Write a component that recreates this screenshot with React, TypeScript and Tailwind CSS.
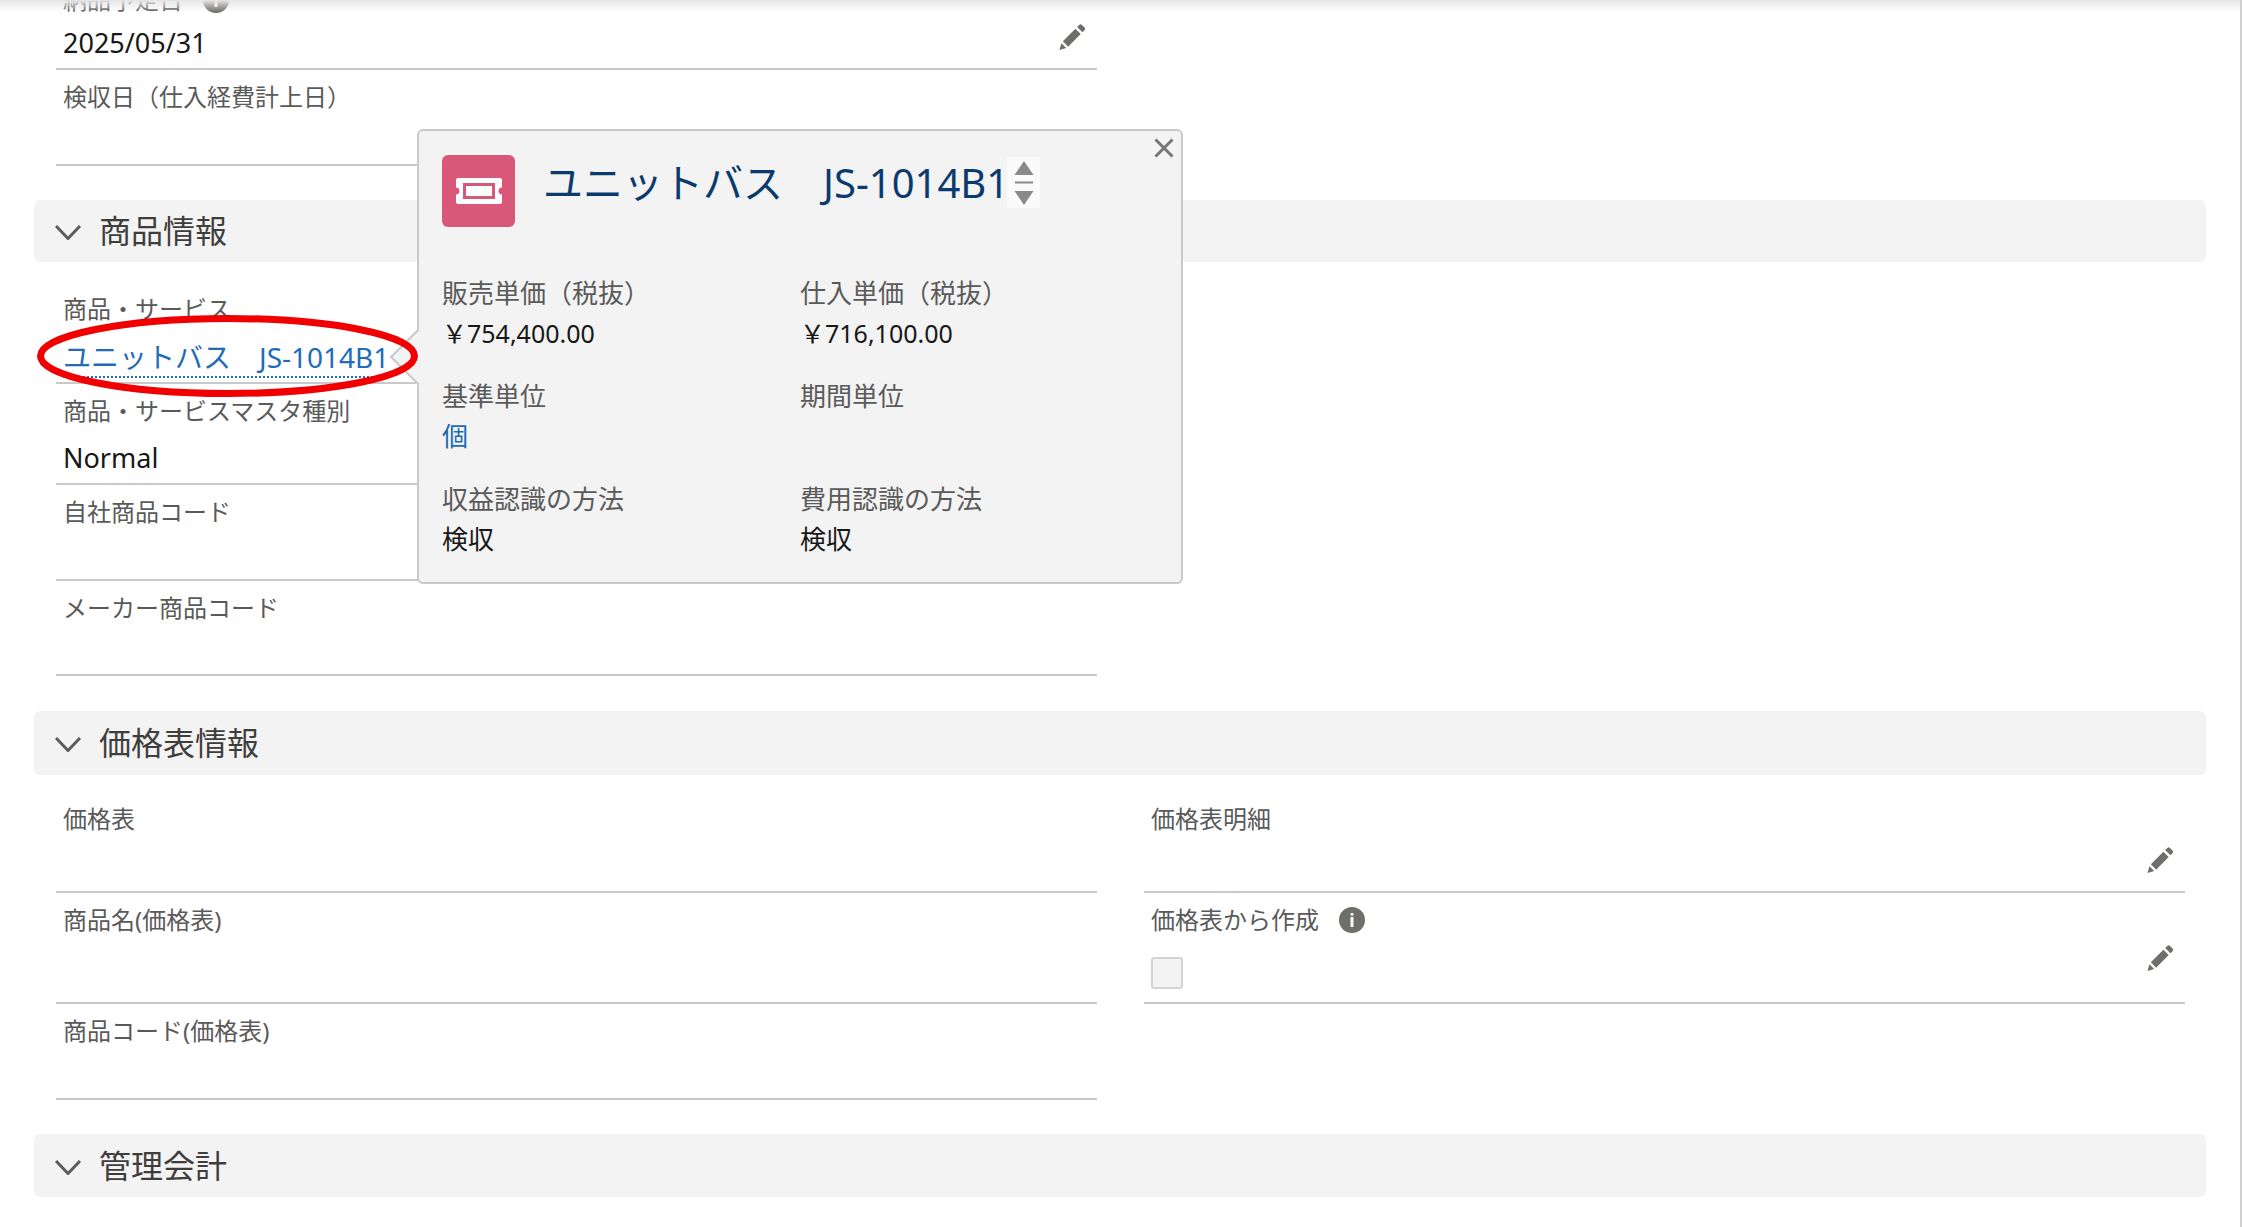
import React from 'react';

const FONT = 'font-["Noto_Sans","Noto_Sans_CJK_JP",sans-serif]';

const Pencil = () => (
  <svg viewBox="0 0 28 28" className="w-[27px] h-[28px] shrink-0 text-[#706e6b]" fill="currentColor">
    <path d="M0.5 27.5 L2.5 20.5 L7.5 25.5 Z" />
    <path d="M4 18.5 L17 5.5 L22.5 11 L9.5 24 Z" />
    <path d="M18.8 3.7 L21 1.5 a2 2 0 0 1 2.8 0 L26.5 4.2 a2 2 0 0 1 0 2.8 L24.3 9.2 Z" />
  </svg>
);

const Info = () => (
  <span className="w-[26px] h-[26px] rounded-full bg-[#706e6b] text-white flex items-center justify-center text-[18px] font-bold leading-none">i</span>
);

const Chevron = () => (
  <svg viewBox="0 0 26 15" className="w-[26px] h-[15px] mt-[3px] shrink-0 text-[#5c5c5c]" fill="none" stroke="currentColor" strokeWidth="3">
    <path d="M1 1 L13 13.5 L25 1" />
  </svg>
);

const SectionHeader = ({ title, className }: { title: string; className: string }) => (
  <div className={`flex items-center gap-[18px] pl-[21px] rounded-[6px] bg-[#f3f3f3] text-[32px] text-[#3e3e3c] ${className}`}>
    <Chevron />
    <span>{title}</span>
  </div>
);

const Label = ({ children }: { children: React.ReactNode }) => (
  <div className="h-[36px] shrink-0 flex items-center gap-[20px] text-[24px] leading-[36px] text-[#5a5a5a]">{children}</div>
);

type FieldProps = {
  label: string;
  value?: React.ReactNode;
  edit?: boolean;
  info?: boolean;
  className: string;
};

const Field = ({ label, value, edit, info, className }: FieldProps) => (
  <div className={`w-[1041px] flex flex-col border-b-2 border-[#c9c9c9] pt-[9px] pl-[7px] pr-[11px] ${className}`}>
    <Label>
      {label}
      {info && <Info />}
    </Label>
    {(value || edit) && (
      <div className="flex items-center justify-between h-[40px] mt-auto mb-[5px] text-[27px] leading-[40px] text-[#181818]">
        <div>{value}</div>
        {edit && (
          <div className="-translate-y-[6px]">
            <Pencil />
          </div>
        )}
      </div>
    )}
  </div>
);

const PopupField = ({ label, children }: { label: string; children?: React.ReactNode }) => (
  <div>
    <div className="h-[40px] text-[26px] leading-[40px] text-[#5a5a5a]">{label}</div>
    <div className="h-[40px] text-[25px] leading-[40px] text-[#181818]">{children}</div>
  </div>
);

const TicketIcon = () => (
  <div className="w-[73px] h-[72px] rounded-[6px] bg-[#d95879] flex items-center justify-center shrink-0">
    <svg viewBox="0 0 48 28" className="w-[48px] h-[28px]" fill="none">
      <path
        d="M3 1 H45 a2 2 0 0 1 2 2 V10.5 a3.5 3.5 0 0 0 0 7 V25 a2 2 0 0 1 -2 2 H3 a2 2 0 0 1 -2 -2 V17.5 a3.5 3.5 0 0 0 0 -7 V3 a2 2 0 0 1 2 -2 Z"
        fill="#fff"
      />
      <rect x="9.5" y="7.5" width="29" height="13" stroke="#d95879" strokeWidth="3" fill="#fff" />
    </svg>
  </div>
);

const Spinner = () => (
  <div className="w-[33px] h-[51px] mt-[2px] -ml-[2px] bg-[#fafafa] flex flex-col items-center justify-center">
    <svg viewBox="0 0 20 44" className="w-[20px] h-[44px]" fill="#8a8a8a">
      <path d="M10 0 L19.5 14 H0.5 Z" />
      <rect x="1" y="20.5" width="18" height="2" />
      <path d="M0.5 30 H19.5 L10 44 Z" />
    </svg>
  </div>
);

const Popup = () => (
  <div className="absolute left-[417px] top-[129px] w-[766px] h-[455px] rounded-[6px] border-2 border-[#c9c9c9] bg-[#f3f3f3]">
    <div className="absolute -left-[21px] top-[206px] w-[40px] h-[40px] rotate-45 border-l-2 border-b-2 border-[#c9c9c9] bg-[#f3f3f3]" />
    <svg viewBox="0 0 20 20" className="absolute right-[7px] top-[7px] w-[20px] h-[20px]" fill="none" stroke="#777" strokeWidth="3">
      <path d="M1.5 1.5 L18.5 18.5 M18.5 1.5 L1.5 18.5" />
    </svg>
    <div className="relative pl-[23px] pt-[24px]">
      <div className="flex items-start">
        <TicketIcon />
        <div className="ml-[28px] h-[56px] text-[40px] leading-[56px] text-[#0b3a6e]">ユニットバス　JS-1014B1</div>
        <Spinner />
      </div>
      <div className="grid grid-cols-[358px_1fr] gap-y-[23px] mt-[46px]">
        <PopupField label="販売単価（税抜）">￥754,400.00</PopupField>
        <PopupField label="仕入単価（税抜）">￥716,100.00</PopupField>
        <PopupField label="基準単位">
          <span className="text-[26px] text-[#1b6bb3]">個</span>
        </PopupField>
        <PopupField label="期間単位" />
        <PopupField label="収益認識の方法">
          <span className="text-[26px]">検収</span>
        </PopupField>
        <PopupField label="費用認識の方法">
          <span className="text-[26px]">検収</span>
        </PopupField>
      </div>
    </div>
  </div>
);

export default function App() {
  return (
    <div className={`relative w-[2242px] h-[1227px] overflow-hidden bg-white border-r-2 border-[#d0d0d0] ${FONT}`}>
      <div className="-mt-[27px] pl-[56px]">
        <Field label="納品予定日" info value="2025/05/31" edit className="h-[97px]" />
        <Field label="検収日（仕入経費計上日）" className="h-[96px]" />
      </div>

      <div className="ml-[34px] mr-[34px]">
        <SectionHeader title="商品情報" className="h-[62px] mt-[34px]" />
        <div className="pl-[22px] mt-[20px]">
          <Field
            label="商品・サービス"
            value={
              <span className="text-[28px] text-[#1f6cb8] border-b-2 border-dotted border-[#1f6cb8]">ユニットバス　JS-1014B1</span>
            }
            className="h-[102px]"
          />
          <Field label="商品・サービスマスタ種別" value="Normal" className="h-[101px]" />
          <Field label="自社商品コード" className="h-[96px]" />
          <Field label="メーカー商品コード" className="h-[95px]" />
        </div>

        <SectionHeader title="価格表情報" className="h-[64px] mt-[35px]" />
        <div className="pl-[22px] pr-[20px] mt-[17px] grid grid-cols-[1041px_1041px] gap-x-[47px]">
          <Field label="価格表" className="h-[101px]" />
          <Field label="価格表明細" edit className="h-[101px]" />
          <Field label="商品名(価格表)" className="h-[111px]" />
          <div className="w-[1041px] h-[111px] flex flex-col border-b-2 border-[#c9c9c9] pt-[9px] pl-[7px] pr-[11px]">
            <Label>
              価格表から作成
              <Info />
            </Label>
            <div className="flex items-center justify-between mt-auto mb-[13px]">
              <div className="w-[32px] h-[32px] rounded-[3px] border-2 border-[#d4d4d4] bg-[#f3f3f3]" />
              <div className="-translate-y-[15px]">
                <Pencil />
              </div>
            </div>
          </div>
          <Field label="商品コード(価格表)" className="h-[96px]" />
        </div>

        <SectionHeader title="管理会計" className="h-[63px] mt-[34px]" />
      </div>

      <Popup />

      {/* red marker drawn around the link */}
      <svg className="absolute left-[30px] top-[310px] w-[396px] h-[94px]" viewBox="0 0 396 94" fill="none">
        <ellipse cx="197.5" cy="46" rx="187" ry="37.5" stroke="#f00000" strokeWidth="7" />
      </svg>

      <div className="absolute inset-x-0 top-0 h-[12px] bg-gradient-to-b from-[#e6e6e6] to-transparent" />
    </div>
  );
}
